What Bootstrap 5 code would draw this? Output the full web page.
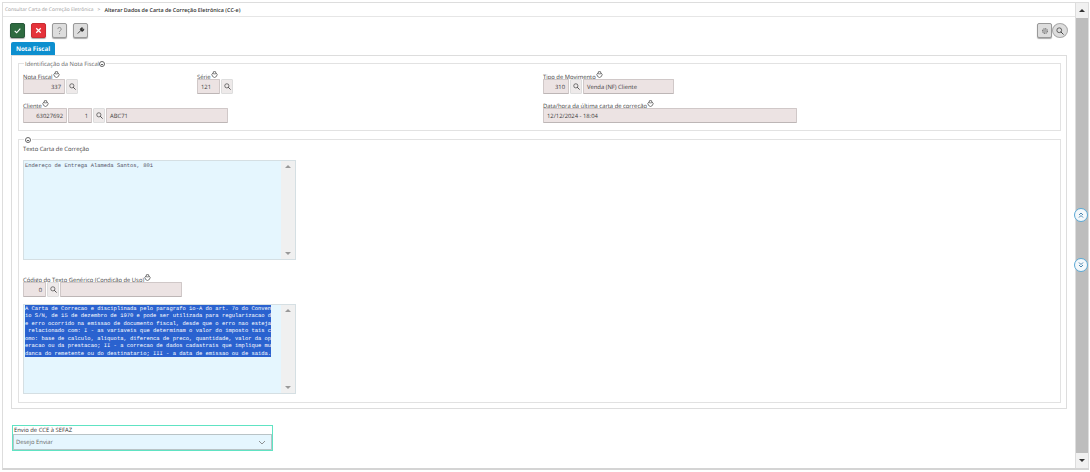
<!DOCTYPE html>
<html lang="pt-BR">
<head>
<meta charset="utf-8">
<title>Alterar Dados de Carta de Correção Eletrônica</title>
<link rel="stylesheet" href="https://cdn.jsdelivr.net/npm/bootstrap@5.3.0/dist/css/bootstrap.min.css">
<style>
html,body{height:472px;overflow:hidden;background:#fff}
body{font-family:"Open Sans","Noto Sans",sans-serif;font-size:5.85px;line-height:8px;color:#3c3c3c;position:relative;text-rendering:geometricPrecision}
.shell{height:472px;padding:2px}
.frame{width:1087px;height:468px;border-top:1px solid #ddd;border-bottom:2px solid #d4d4d4;border-left:1px solid #ddd}
.mainpane{width:1072px}
.crumbs{height:14px;border-bottom:1px solid #e6e6e6;padding-left:2px;font-size:4.9px;color:#999}
.crumbs b{color:#333;font-weight:600;font-size:5.4px}
.tools{height:24px;padding:6px 0 0 7px}
.tb{width:15px;height:15px;border:1px solid #999;border-radius:2px;background:#ddd;margin-right:6px;padding:0;box-shadow:0 1px 1px #aaa}
.tb svg{width:9px;height:9px}
.tb-ok{background:#2f6b40;border-color:#28583a}
.tb-no{background:#e5323a;border-color:#c92c33}
.tb-end{margin:0}
.roundb{width:16px;height:15px;border:1px solid #aaa;border-radius:50%;background:#ddd;padding:0}
.roundb svg,.tb-end svg{width:8px;height:8px}
.rightb{padding-right:7px}
.tabhead{height:13px;margin:1px 0 0 8px;width:44px;background:#0d8fcf;color:#fff;font-weight:700;font-size:6.2px;border-radius:2px 2px 0 0}
.tabbody{margin:0 8px 0 8px;height:354px;border:1px solid #ddd;padding:7px 5px 0 6px}
.fset{border:1px solid #e2e2e2;position:relative;padding:0 4px;margin:0}
.fs-a{height:68px;margin-bottom:8px}
.fs-b{height:264px}
.toprow{padding-top:3px}
.leg{position:absolute;top:-4px;left:5px;background:#fff;padding:0 1px;color:#666;height:8px}
.tog{display:inline-block;width:6px;height:6px;border:.7px solid #666;border-radius:50%;position:relative;vertical-align:-1px}
.tog::after{content:"";position:absolute;left:1px;right:1px;top:2.1px;height:.7px;background:#666}
.lbl{display:block;height:8px;line-height:6px;white-space:nowrap}
.lbl-gap{margin-top:4px}
.lbl-gap2{margin-top:14px}
.clip{width:7px;height:7px;vertical-align:1px}
.cola{width:174px}.colb{width:346px}.colwide{width:520px}
.fldrow{height:15px;margin-bottom:6px}
.fldrow-b{margin-bottom:7px}
.inp{height:15px;background:#ece3e3;border:1px solid #d0c8c8;border-bottom-color:#bdb6b6;padding:0 3px;white-space:nowrap;margin-right:1px;border-radius:1px}
.mag{width:12px;height:15px;background:#eeeaea;border:1px solid #ddd;margin-right:1px;border-radius:1px}
.mag svg{width:7px;height:7px}
.w42{width:42px}.w26{width:26px}.w91{width:91px}.w44{width:44px}.w24{width:24px}.w122{width:122px}.w254{width:254px}.w23{width:23px}
.hlbl{height:20px}
.tarea{width:273px;background:#e5f6fe;border:1px solid #d5dfe3;font-family:"Liberation Mono",monospace;font-size:5.47px;color:#556}
.ta-1{height:100px}.ta-2{height:90px}
.ta-txt{flex:1;padding-left:1px;white-space:pre;overflow:hidden}
.ta-1 .ta-txt{padding-top:1px}
.ln{height:7.43px;line-height:7.43px;width:fit-content}
.ln-sel{background:#2a62cf;color:#fff}
.ta-sb{width:14px;background:#f0f0f0;padding:4px 0}
.arrup{width:0;height:0;border-left:3px solid transparent;border-right:3px solid transparent;border-bottom:3px solid #999}
.arrdn{width:0;height:0;border-left:3px solid transparent;border-right:3px solid transparent;border-top:3px solid #999}
.envio{width:261px;height:26px;margin:16px 0 0 9px;border:1px solid #60e3c3;background:#fff}
.envio .lbl{padding-left:1px;color:#333;line-height:8px}
.sel-box{height:16px;background:#e5f6fe;border:1px solid #b9c3c6;padding:0 5px 0 2px;color:#666}
.sel-box svg{width:8px;height:5px}
.pscroll{width:14px;background:#bdbdbd;border-left:1px solid #ddd;border-right:1px solid #ddd}
.psb-btn{height:15px;background:#f1f1f1}
.psb-up{width:0;height:0;border-left:3px solid transparent;border-right:3px solid transparent;border-bottom:3px solid #333}
.psb-dn{width:0;height:0;border-left:3px solid transparent;border-right:3px solid transparent;border-top:3px solid #333}
.fab{position:absolute;left:1074px;width:14px;height:14px;border-radius:50%;background:#f4f8fb;border:1px solid #5aa9d6}
.fab svg{width:8px;height:8px}
.fab-up{top:208px}.fab-dn{top:258px}
</style>
</head>
<body>
<svg width="0" height="0" class="position-absolute">
<defs>
<symbol id="ic-mag" viewBox="0 0 16 16"><circle cx="6.5" cy="6.5" r="4.8" fill="none" stroke="#444" stroke-width="1.6"/><path d="M10 10l4.5 4.5" stroke="#444" stroke-width="2" stroke-linecap="round"/></symbol>
<symbol id="ic-clip" viewBox="0 0 12 12"><path d="M3.600 3a4.300 4.300 0 1 0 4.800 0" fill="none" stroke="#444" stroke-width="1.200"/><rect x="4" y="1" width="4" height="4" rx=".6" fill="none" stroke="#444" stroke-width="1.100"/></symbol>
</defs>
</svg>
<div class="shell">
<div class="frame d-flex">
<div class="mainpane">
  <div class="crumbs d-flex align-items-center gap-1"><span>Consultar Carta de Correção Eletrônica</span><span>&gt;</span><b>Alterar Dados de Carta de Correção Eletrônica (CC-e)</b></div>
  <div class="tools d-flex align-items-start">
    <button class="tb tb-ok d-flex align-items-center justify-content-center" type="button" aria-label="Confirmar"><svg viewBox="0 0 16 16"><path d="M3 8.500l3.500 3.500L13 4.500" fill="none" stroke="#fff" stroke-width="2"/></svg></button>
    <button class="tb tb-no d-flex align-items-center justify-content-center" type="button" aria-label="Cancelar"><svg viewBox="0 0 16 16"><path d="M4 4l8 8M12 4l-8 8" stroke="#fff" stroke-width="2.200"/></svg></button>
    <button class="tb d-flex align-items-center justify-content-center" type="button" aria-label="Ajuda"><svg viewBox="0 0 16 16"><path d="M5 5.500a3 3 0 1 1 4.600 2.600C8.500 8.800 8 9.400 8 10.500" fill="none" stroke="#888" stroke-width="1.700"/><circle cx="8" cy="13.500" r="1.100" fill="#888"/></svg></button>
    <button class="tb d-flex align-items-center justify-content-center" type="button" aria-label="Ferramentas"><svg viewBox="0 0 16 16"><path d="M3 13.500l6-6M8 7.500a3 3 0 0 1 4-4l-2 2 1.500 1.500 2-2a3 3 0 0 1-4 4" fill="#333" stroke="#333" stroke-width="1.500"/></svg></button>
    <div class="ms-auto d-flex rightb">
      <button class="tb tb-end d-flex align-items-center justify-content-center" type="button" aria-label="Configurar"><svg viewBox="0 0 16 16"><circle cx="8" cy="8" r="4.500" fill="none" stroke="#666" stroke-width="2.500" stroke-dasharray="2.200 1"/><circle cx="8" cy="8" r="1.500" fill="#666"/></svg></button>
      <button class="roundb d-flex align-items-center justify-content-center" type="button" aria-label="Pesquisar"><svg><use href="#ic-mag"/></svg></button>
    </div>
  </div>
  <div class="tabhead d-flex align-items-center justify-content-center">Nota Fiscal</div>
  <div class="tabbody">
    <div class="fset fs-a">
      <div class="leg">Identificação da Nota Fiscal<span class="tog"></span></div>
      <div class="d-flex toprow">
        <div class="cola"><span class="lbl lbl-gap">Nota Fiscal<svg class="clip"><use href="#ic-clip"/></svg></span>
          <div class="d-flex fldrow"><div class="inp w42 d-flex align-items-center justify-content-end">337</div><div class="mag d-flex align-items-center justify-content-center"><svg><use href="#ic-mag"/></svg></div></div></div>
        <div class="colb"><span class="lbl lbl-gap">Série<svg class="clip"><use href="#ic-clip"/></svg></span>
          <div class="d-flex fldrow"><div class="inp w23 d-flex align-items-center">121</div><div class="mag d-flex align-items-center justify-content-center"><svg><use href="#ic-mag"/></svg></div></div></div>
        <div><span class="lbl lbl-gap">Tipo de Movimento<svg class="clip"><use href="#ic-clip"/></svg></span>
          <div class="d-flex fldrow"><div class="inp w26 d-flex align-items-center justify-content-end">310</div><div class="mag d-flex align-items-center justify-content-center"><svg><use href="#ic-mag"/></svg></div><div class="inp w91 d-flex align-items-center">Venda (NF) Cliente</div></div></div>
      </div>
      <div class="d-flex">
        <div class="colwide"><span class="lbl">Cliente<svg class="clip"><use href="#ic-clip"/></svg></span>
          <div class="d-flex fldrow"><div class="inp w44 d-flex align-items-center justify-content-end">63027692</div><div class="inp w24 d-flex align-items-center justify-content-end">1</div><div class="mag d-flex align-items-center justify-content-center"><svg><use href="#ic-mag"/></svg></div><div class="inp w122 d-flex align-items-center">ABC71</div></div></div>
        <div><span class="lbl">Data/hora da última carta de correção<svg class="clip"><use href="#ic-clip"/></svg></span>
          <div class="d-flex fldrow"><div class="inp w254 d-flex align-items-center">12/12/2024 - 18:04</div></div></div>
      </div>
    </div>
    <div class="fset fs-b">
      <div class="leg"><span class="tog"></span></div>
      <div class="hlbl d-flex align-items-center"><span class="lbl">Texto Carta de Correção</span></div>
      <div class="tarea ta-1 d-flex"><div class="ta-txt"><div class="ln">Endereço de Entrega Alameda Santos, 801</div></div><div class="ta-sb d-flex flex-column align-items-center justify-content-between"><span class="arrup"></span><span class="arrdn"></span></div></div>
      <span class="lbl lbl-gap2">Código do Texto Genérico (Condição de Uso)<svg class="clip"><use href="#ic-clip"/></svg></span>
      <div class="d-flex fldrow fldrow-b"><div class="inp w23 d-flex align-items-center justify-content-end">0</div><div class="mag d-flex align-items-center justify-content-center"><svg><use href="#ic-mag"/></svg></div><div class="inp w122"></div></div>
      <div class="tarea ta-2 d-flex"><div class="ta-txt"><div class="ln ln-sel">A Carta de Correcao e disciplinada pelo paragrafo 1o-A do art. 7o do Conven</div><div class="ln ln-sel">io S/N, de 15 de dezembro de 1970 e pode ser utilizada para regularizacao d</div><div class="ln ln-sel">e erro ocorrido na emissao de documento fiscal, desde que o erro nao esteja</div><div class="ln ln-sel"> relacionado com: I - as variaveis que determinam o valor do imposto tais c</div><div class="ln ln-sel">omo: base de calculo, aliquota, diferenca de preco, quantidade, valor da op</div><div class="ln ln-sel">eracao ou da prestacao; II - a correcao de dados cadastrais que implique mu</div><div class="ln ln-sel">danca do remetente ou do destinatario; III - a data de emissao ou de saida.</div></div><div class="ta-sb d-flex flex-column align-items-center justify-content-between"><span class="arrup"></span><span class="arrdn"></span></div></div>
    </div>
  </div>
  <div class="envio">
    <span class="lbl">Envio de CCE à SEFAZ</span>
    <div class="sel-box d-flex align-items-center justify-content-between"><span>Desejo Enviar</span><svg viewBox="0 0 16 10"><path d="M2 2l6 6 6-6" fill="none" stroke="#777" stroke-width="1.600"/></svg></div>
  </div>
</div>
<div class="pscroll d-flex flex-column justify-content-between">
  <div class="psb-btn d-flex align-items-center justify-content-center"><span class="psb-up"></span></div>
  <div class="psb-btn d-flex align-items-center justify-content-center"><span class="psb-dn"></span></div>
</div>
</div>
</div>
<div class="fab fab-up d-flex align-items-center justify-content-center"><svg viewBox="0 0 16 16"><path d="M4 8l4-4 4 4M4 13l4-4 4 4" fill="none" stroke="#4a86b0" stroke-width="2"/></svg></div>
<div class="fab fab-dn d-flex align-items-center justify-content-center"><svg viewBox="0 0 16 16"><path d="M4 3l4 4 4-4M4 8l4 4 4-4" fill="none" stroke="#4a86b0" stroke-width="2"/></svg></div>
<script src="https://cdn.jsdelivr.net/npm/bootstrap@5.3.0/dist/js/bootstrap.bundle.min.js"></script>
</body>
</html>
